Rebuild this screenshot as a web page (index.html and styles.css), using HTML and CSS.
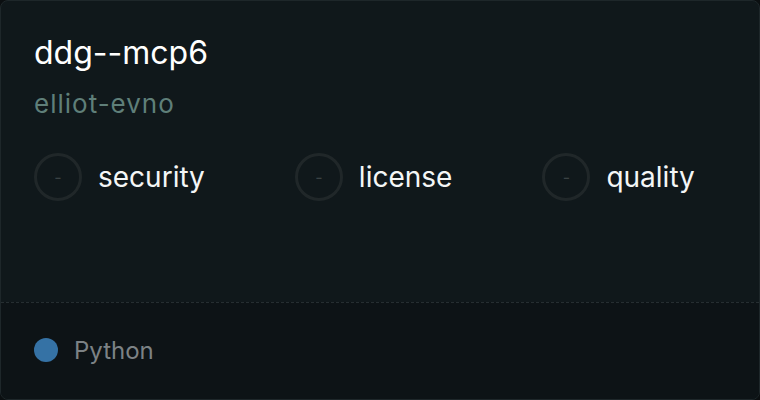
FILE: index.html
```html
<!DOCTYPE html>
<html lang="en">
<head>
  <meta charset="UTF-8">
  <meta name="viewport" content="width=device-width, initial-scale=1.0">
  <title>ddg--mcp6</title>
  <link rel="stylesheet" href="styles.css">
</head>
<body>
  <div class="card">
    <div class="card-body">
      <h1 class="repo-name">ddg--mcp6</h1>
      <div class="repo-owner">elliot-evno</div>
      <div class="scores">
        <div class="score">
          <span class="score-ring">-</span>
          <span class="score-label">security</span>
        </div>
        <div class="score">
          <span class="score-ring">-</span>
          <span class="score-label">license</span>
        </div>
        <div class="score">
          <span class="score-ring">-</span>
          <span class="score-label">quality</span>
        </div>
      </div>
    </div>
    <div class="card-footer">
      <span class="lang-dot"></span>
      <span class="lang-name">Python</span>
    </div>
  </div>
</body>
</html>
```

FILE: styles.css
```css
body {
  margin: 0;
  padding: 0;
  background: #0b0f11;
  font-family: Inter, "Noto Sans", sans-serif;
}
.card {
  box-sizing: border-box;
  width: 760px;
  height: 400px;
  display: flex;
  flex-direction: column;
  background: #10181b;
  border: 1px solid #1e272a;
  border-radius: 8px;
  overflow: hidden;
}
.card-body {
  flex: 1;
  padding: 33px 33px 0;
}
.repo-name {
  margin: 0;
  font-size: 32px;
  font-weight: 400;
  line-height: 38px;
  color: #ffffff;
}
.repo-owner {
  margin-top: 16px;
  font-size: 26px;
  line-height: 32px;
  letter-spacing: 1px;
  color: #5f7f79;
}
.scores {
  display: flex;
  gap: 90px;
  margin-top: 33px;
}
.score {
  display: flex;
  align-items: center;
  gap: 16px;
}
.score-ring {
  box-sizing: border-box;
  width: 48px;
  height: 48px;
  border: 3px solid #202729;
  border-radius: 50%;
  display: flex;
  align-items: center;
  justify-content: center;
  font-size: 16px;
  color: #3a4244;
}
.score-label {
  font-size: 28px;
  color: #f4f6f6;
}
.card-footer {
  height: 94px;
  display: flex;
  align-items: center;
  gap: 16px;
  padding: 0 33px 2px;
  background: #0d1316;
  border-top: 1px dashed #262e31;
}
.lang-dot {
  width: 24px;
  height: 24px;
  border-radius: 50%;
  background: #3572a5;
}
.lang-name {
  font-size: 24px;
  color: #7c8285;
}
```
